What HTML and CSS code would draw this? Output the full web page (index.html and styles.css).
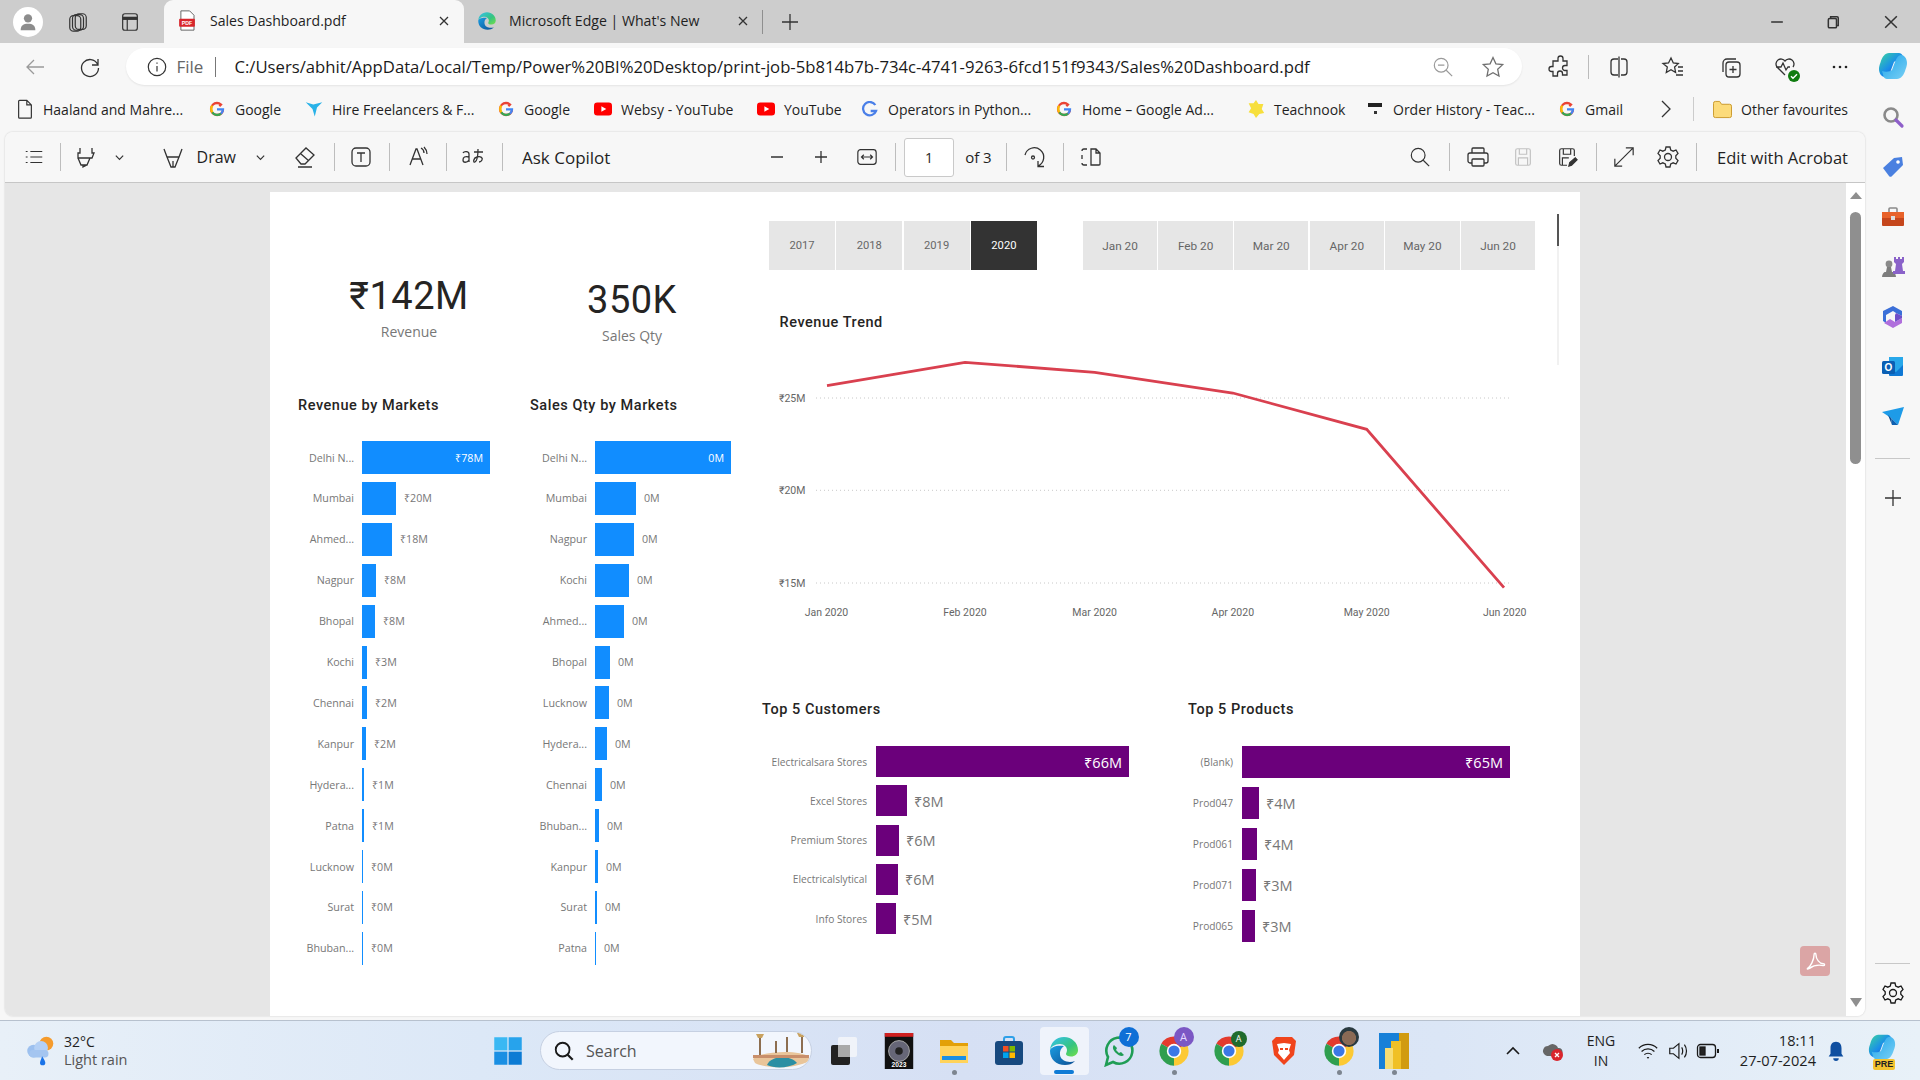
FILE: index.html
```html
<!DOCTYPE html>
<html lang="en">
<head>
  <meta charset="UTF-8">
  <title>Sales Dashboard.pdf</title>
  <link rel="stylesheet" href="styles.css">
</head>
<body>
  <svg class="defs" width="0" height="0">
    <symbol id="g" viewBox="0 0 24 24">
      <path d="M21 12.5c0 5-3.600 8.500-9 8.500a9 9 0 0 1 0-18c2.400 0 4.400.9 6 2.300l-2.500 2.400" fill="none" stroke="#ea4335" stroke-width="3.400"/>
      <path d="M5 7a9 9 0 0 0 0 10" fill="none" stroke="#fbbc05" stroke-width="3.400"/>
      <path d="M5 17a9 9 0 0 0 13 2" fill="none" stroke="#34a853" stroke-width="3.400"/>
      <path d="M12 12.500h9c0 3-1 5-3 6.500" fill="none" stroke="#4285f4" stroke-width="3.400"/>
    </symbol>
    <symbol id="yt" viewBox="0 0 24 24">
      <rect x="1" y="4" width="22" height="16" rx="4" fill="#f00"/>
      <path d="M10 8.500v7l6-3.500z" fill="#fff"/>
    </symbol>
    <symbol id="chrome" viewBox="0 0 24 24">
      <path d="M12 12L2.500 6.500A11 11 0 0 1 21.500 6.500z" fill="#e33b2e"/>
      <path d="M12 12l9.500-5.500A11 11 0 0 1 12 23z" fill="#fcc934"/>
      <path d="M12 12v11A11 11 0 0 1 2.500 6.500z" fill="#2f9e4f"/>
      <circle cx="12" cy="12" r="5.400" fill="#fff"/>
      <circle cx="12" cy="12" r="4.200" fill="#3b78e7"/>
    </symbol>
    <linearGradient id="edgeTop" x1="0" y1="0" x2="1" y2="1">
      <stop offset="0" stop-color="#35c1f1"/><stop offset=".6" stop-color="#36c47f"/><stop offset="1" stop-color="#74e04a"/>
    </linearGradient>
    <linearGradient id="edgeLow" x1="0" y1="0" x2="1" y2="1">
      <stop offset="0" stop-color="#1b9de2"/><stop offset="1" stop-color="#0c4f94"/>
    </linearGradient>
    <symbol id="edge" viewBox="0 0 32 32">
      <path d="M2 16C2 8 8 2 16 2c8 0 14 6 14 13 0 4-3 6.500-7 6.500-3 0-5-1-5-2.500 0-1 1-2 1-4 0-3-3-6-7-6-5 0-10 3-10 7z" fill="url(#edgeTop)"/>
      <path d="M2 16c0 8 6 14 15 14 4 0 7-1 10-4-5 2-14 1-15-6-.5-4 1-7 4-9-7-1-14 1-14 5z" fill="url(#edgeLow)"/>
    </symbol>
    <linearGradient id="copi" x1="0" y1="0" x2="1" y2="1">
      <stop offset="0" stop-color="#3bd6a0"/><stop offset=".5" stop-color="#1a8ee8"/><stop offset="1" stop-color="#1740c0"/>
    </linearGradient>
    <linearGradient id="copi2" x1="0" y1="0" x2="1" y2="1">
      <stop offset="0" stop-color="#1fa4ea"/><stop offset="1" stop-color="#7ad0f5"/>
    </linearGradient>
    <symbol id="copilot" viewBox="0 0 32 32">
      <path d="M12 3h10c1.500 0 3 1 3.500 2.500L27 11c-3-1-8-1-10 1l-3 8c-1 3-3 7-6 7-3 0-6-3-6-8 0-2 .5-4 1.500-6.500C5 7 8 3 12 3z" fill="url(#copi)"/>
      <path d="M20 29H10c-1.500 0-3-1-3.500-2.500L5 21c3 1 8 1 10-1l3-8c1-3 3-7 6-7 3 0 6 3 6 8 0 2-.5 4-1.500 6.500C27 25 24 29 20 29z" fill="url(#copi2)"/>
    </symbol>
  </svg>

  <header class="tabstrip">
    <div class="avatar">
      <svg viewBox="0 0 24 24" width="22" height="22"><circle cx="12" cy="8" r="4.500" fill="#8c8c8c"/><path d="M4 21c0-5 3-7 8-7s8 2 8 7z" fill="#8c8c8c"/></svg>
    </div>
    <div class="strip-btn workspaces">
      <svg class="ic" viewBox="0 0 24 24" width="22" height="22"><rect x="9" y="3" width="12" height="17" rx="4"/><rect x="6" y="4" width="12" height="17" rx="4"/><rect x="3" y="5" width="12" height="17" rx="4"/></svg>
    </div>
    <div class="strip-btn tabactions">
      <svg class="ic" viewBox="0 0 24 24" width="22" height="22"><rect x="4" y="3" width="16" height="18" rx="2.500"/><path d="M4 8h16" stroke-width="3.500"/><path d="M9 8v13"/></svg>
    </div>
    <div class="tab active">
      <svg viewBox="0 0 20 24" width="18" height="21"><path d="M3 1h10l5 5v17H3z" fill="#fff" stroke="#555"/><rect x="1" y="10" width="18" height="9" rx="1" fill="#d8262c"/><text x="10" y="17" class="pdf-mark">PDF</text></svg>
      <span class="tab-title">Sales Dashboard.pdf</span>
      <svg class="ic close" viewBox="0 0 12 12" width="12" height="12"><path d="M2 2l8 8M10 2l-8 8"/></svg>
    </div>
    <div class="tab second">
      <svg viewBox="0 0 32 32" width="20" height="20"><use href="#edge"/></svg>
      <span class="tab-title">Microsoft Edge | What's New</span>
      <svg class="ic close" viewBox="0 0 12 12" width="12" height="12"><path d="M2 2l8 8M10 2l-8 8"/></svg>
    </div>
    <span class="strip-sep"></span>
    <div class="strip-btn newtab">
      <svg class="ic" viewBox="0 0 20 20" width="20" height="20"><path d="M10 2v16M2 10h16"/></svg>
    </div>
    <div class="window-btns">
      <svg class="ic" viewBox="0 0 12 12" width="14" height="14"><path d="M1 6h10"/></svg>
      <svg class="ic" viewBox="0 0 12 12" width="14" height="14"><rect x="2" y="3" width="7" height="8" rx="1"/><path d="M4 3V1.500h5.500a1 1 0 0 1 1 1V9H9"/></svg>
      <svg class="ic" viewBox="0 0 12 12" width="14" height="14"><path d="M1 1l10 10M11 1L1 11"/></svg>
    </div>
  </header>

  <div class="browser">
    <div class="content">
      <div class="addr">
        <div class="addr-nav">
          <svg class="ic dim" viewBox="0 0 24 24" width="24" height="24"><path d="M21 12H4M11 5l-7 7 7 7"/></svg>
        </div>
        <div class="addr-nav reload">
          <svg class="ic" viewBox="0 0 24 24" width="24" height="24"><path d="M19.500 9A8.500 8.500 0 1 0 20.500 13M20 4v6h-6"/></svg>
        </div>
        <div class="pill">
          <svg class="ic info" viewBox="0 0 24 24" width="22" height="22"><circle cx="12" cy="12" r="9.500"/><path d="M12 11v6M12 7v1.500"/></svg>
          <span class="file-tag">File</span>
          <span class="pill-sep"></span>
          <span class="url">C:/Users/abhit/AppData/Local/Temp/Power%20BI%20Desktop/print-job-5b814b7b-734c-4741-9263-6fcd151f9343/Sales%20Dashboard.pdf</span>
          <svg class="ic dim zoomout" viewBox="0 0 24 24" width="22" height="22"><circle cx="10" cy="10" r="7.500"/><path d="M15.500 15.500L22 22M6.500 10h7"/></svg>
          <svg class="ic star" viewBox="0 0 24 24" width="24" height="24"><path d="M12 2.500l2.900 6.300 6.800.8-5 4.700 1.300 6.800-6-3.400-6 3.400 1.300-6.800-5-4.700 6.800-.8z"/></svg>
        </div>
        <div class="addr-tools">
          <svg class="ic" viewBox="0 0 24 24" width="24" height="24"><path d="M10 3.500a2.500 2.500 0 0 1 5 0V6h4v4.500h-2a2.500 2.500 0 0 0 0 5h2V20h-4.500v-1.500a2.500 2.500 0 0 0-5 0V21H5v-4.500H3.500a2.500 2.500 0 0 1 0-5H5V6h5z"/></svg>
          <span class="tool-sep"></span>
          <svg class="ic" viewBox="0 0 24 24" width="24" height="24"><path d="M11 4H7a3 3 0 0 0-3 3v10a3 3 0 0 0 3 3h4M14 4h3a3 3 0 0 1 3 3v10a3 3 0 0 1-3 3h-3M12 1.500v21"/></svg>
          <svg class="ic" viewBox="0 0 24 24" width="24" height="24"><path d="M10 3l2.300 5 5 .6-3.700 3.500 1 5.400-4.600-2.700-4.700 2.700 1-5.400L2 8.600l5.500-.6zM17 12h5M17 16h5M15 20h7"/></svg>
          <svg class="ic" viewBox="0 0 24 24" width="24" height="24"><rect x="7" y="7" width="14" height="15" rx="3"/><path d="M14 11v7M10.500 14.500h7M17 4H8a4 4 0 0 0-4 4v9"/></svg>
          <div class="health">
            <svg class="ic" viewBox="0 0 24 24" width="24" height="24"><path d="M12 20L4 12a5 5 0 0 1 8-6 5 5 0 0 1 8 6M3 12h5l2-4 3 7 2-3h2"/></svg>
            <svg class="health-ok" viewBox="0 0 12 12" width="12" height="12"><circle cx="6" cy="6" r="6" fill="#107c10"/><path d="M3 6.200l2 2 4-4" fill="none" stroke="#fff" stroke-width="1.400"/></svg>
          </div>
          <svg viewBox="0 0 20 6" width="20" height="6"><circle cx="4" cy="3" r="1.300" fill="#222"/><circle cx="10" cy="3" r="1.300" fill="#222"/><circle cx="16" cy="3" r="1.300" fill="#222"/></svg>
        </div>
      </div>

      <nav class="bookmarks">
        <a class="bm"><svg class="ic" viewBox="0 0 18 22" width="18" height="20"><path d="M3 1.500h8l5 5V20a1 1 0 0 1-1 1H3a1 1 0 0 1-1-1V2.500a1 1 0 0 1 1-1zM11 1.500V6.500h5"/></svg>Haaland and Mahre...</a>
        <a class="bm"><svg viewBox="0 0 24 24" width="18" height="16"><use href="#g"/></svg>Google</a>
        <a class="bm"><svg viewBox="0 0 24 24" width="18" height="18"><path d="M1 3l10 3 12-3-7 7-3 12-3-10z" fill="#29b2e8"/></svg>Hire Freelancers &amp; F...</a>
        <a class="bm"><svg viewBox="0 0 24 24" width="18" height="16"><use href="#g"/></svg>Google</a>
        <a class="bm"><svg viewBox="1 1 22 22" width="18" height="18"><use href="#yt" width="24" height="24"/></svg>Websy - YouTube</a>
        <a class="bm"><svg viewBox="1 1 22 22" width="18" height="18"><use href="#yt" width="24" height="24"/></svg>YouTube</a>
        <a class="bm"><svg viewBox="0 0 24 24" width="18" height="16"><path d="M20 6a10 10 0 1 0 1 9h-8" fill="none" stroke="#4a7fe8" stroke-width="3.400"/></svg>Operators in Python...</a>
        <a class="bm"><svg viewBox="0 0 24 24" width="18" height="16"><use href="#g"/></svg>Home – Google Ad...</a>
        <a class="bm"><svg viewBox="1 1 22 22" width="18" height="20"><path d="M12 1l3 5 6 0-2 6 3 5-6 1-4 5-3-5-6-2 3-5-3-6 6 0z" fill="#f7df3c"/></svg>Teachnook</a>
        <a class="bm"><svg viewBox="0 0 18 18" width="18" height="18"><rect x="2" y="3" width="14" height="4" fill="#222"/><rect x="8" y="11" width="3" height="3" fill="#333"/></svg>Order History - Teac...</a>
        <a class="bm"><svg viewBox="0 0 24 24" width="18" height="16"><use href="#g"/></svg>Gmail</a>
        <svg class="ic bm-more" viewBox="0 0 12 20" width="12" height="20"><path d="M2 2l8 8-8 8"/></svg>
        <span class="bm-sep"></span>
        <a class="bm"><svg viewBox="2 3 20 19" width="19" height="19"><path d="M2.500 6a2 2 0 0 1 2-2h4.500l2 3h8.500a2 2 0 0 1 2 2v10a2 2 0 0 1-2 2H4.500a2 2 0 0 1-2-2z" fill="#fcdb7a" stroke="#c9982a"/></svg>Other favourites</a>
      </nav>

      <main class="pdf">
        <div class="pdf-toolbar">
          <div class="tb-left">
            <svg class="ic" viewBox="0 0 24 24" width="22" height="22"><path d="M8 6h13M8 12h13M8 18h13M3 6h2M3 12h2M3 18h2"/></svg>
            <span class="tb-sep"></span>
            <svg class="ic" viewBox="0 0 24 24" width="24" height="24"><path d="M6 3v5H4v5h14l2-5h-2V3M4 13l3 7h6l3-7M9 20v2l4-2"/></svg>
            <svg class="ic" viewBox="0 0 12 12" width="11" height="11"><path d="M2 4l4 4 4-4"/></svg>
            <div class="tb-draw">
              <svg class="ic" viewBox="0 0 24 24" width="24" height="24"><path d="M3 4l3 8h12l3-8M6 12l4 10h4l4-10M12 22v-6"/></svg>
              <span>Draw</span>
            </div>
            <svg class="ic" viewBox="0 0 12 12" width="11" height="11"><path d="M2 4l4 4 4-4"/></svg>
            <svg class="ic" viewBox="0 0 24 24" width="24" height="24"><path d="M3 13L13 3l8 7-9 9H8zM8 9l8 7M5 22h14"/></svg>
            <span class="tb-sep"></span>
            <svg class="ic" viewBox="0 0 24 24" width="24" height="24"><rect x="3" y="3" width="18" height="18" rx="4"/><path d="M8 8h8M12 8v9"/></svg>
            <span class="tb-sep"></span>
            <svg class="ic" viewBox="0 0 24 24" width="24" height="24"><path d="M4 20L10 4h1l6 16M6.500 14h8M15 3c2 1 3 3 3 5M18 2c2 2 3 4 3 7"/></svg>
            <span class="tb-sep"></span>
            <svg class="ic" viewBox="0 0 24 24" width="24" height="24"><path d="M2 8c1-2 6-2 6 1v8M8 12c-4-1-6 0-6 3s4 3 6 0M13 7h9M17 4c0 6-1 12-3 13-2 1-2-4 2-5 4-1 6 1 5 3s-2 2-3 2"/></svg>
            <span class="tb-sep"></span>
            <span class="tb-text ask">Ask Copilot</span>
          </div>
          <div class="tb-mid">
            <svg class="ic" viewBox="0 0 16 16" width="16" height="16"><path d="M2 8h12"/></svg>
            <svg class="ic" viewBox="0 0 16 16" width="16" height="16"><path d="M2 8h12M8 2v12"/></svg>
            <svg class="ic" viewBox="0 0 24 24" width="22" height="22"><rect x="2" y="4" width="20" height="16" rx="3"/><path d="M6 12h12M8.500 9.500L6 12l2.500 2.500M15.500 9.500L18 12l-2.500 2.500"/></svg>
            <span class="tb-sep"></span>
            <span class="page-box">1</span>
            <span class="tb-of">of 3</span>
            <span class="tb-sep"></span>
            <svg class="ic" viewBox="0 0 24 24" width="24" height="24"><path d="M3 10a9.500 9.500 0 1 1 13 11M16 16v5.500h6"/><circle cx="11" cy="12.500" r="1.500"/></svg>
            <span class="tb-sep"></span>
            <svg class="ic" viewBox="0 0 24 24" width="24" height="24"><path d="M12 4h5l4 4v11a1 1 0 0 1-1 1h-8zM17 4v4h4M8 4H5a2 2 0 0 0-2 2M3 10v4M3 18a2 2 0 0 0 2 2h3" /></svg>
          </div>
          <div class="tb-right">
            <svg class="ic" viewBox="0 0 24 24" width="22" height="22"><circle cx="10" cy="10" r="7.500"/><path d="M15.500 15.500L22 22"/></svg>
            <span class="tb-sep"></span>
            <svg class="ic" viewBox="0 0 24 24" width="24" height="24"><path d="M6 8V4a1 1 0 0 1 1-1h10a1 1 0 0 1 1 1v4M6 18H4a2 2 0 0 1-2-2v-6a2 2 0 0 1 2-2h16a2 2 0 0 1 2 2v6a2 2 0 0 1-2 2h-2"/><rect x="6" y="14" width="12" height="7" rx="1"/></svg>
            <svg class="ic off" viewBox="0 0 24 24" width="22" height="22"><path d="M4 5a2 2 0 0 1 2-2h12a2 2 0 0 1 2 2v14a2 2 0 0 1-2 2H6a2 2 0 0 1-2-2zM8 3v6h8V3M7 21v-8h10v8"/></svg>
            <svg class="ic" viewBox="0 0 24 24" width="22" height="22"><path d="M12 21H6a2 2 0 0 1-2-2V5a2 2 0 0 1 2-2h12a2 2 0 0 1 2 2v6M8 3v6h8V3M7 21v-8h7"/><path d="M14 22l1-4 6-5 2 2-6 6z" fill="#333"/></svg>
            <span class="tb-sep"></span>
            <svg class="ic" viewBox="0 0 24 24" width="22" height="22"><path d="M14 2h8v8M22 2L2 22M2 14v8h8"/></svg>
            <svg class="ic" viewBox="0 0 24 24" width="24" height="24"><circle cx="12" cy="12" r="3.500"/><path d="M10 2h4l.7 3 2.500 1.200L20 5l2 3.500-2.200 2.200v2.600L22 15.500 20 19l-2.800-1.200-2.500 1.200-.7 3h-4l-.7-3-2.500-1.200L4 19l-2-3.500 2.200-2.200v-2.600L2 8.500 4 5l2.800 1.200L9.300 5z"/></svg>
            <span class="tb-sep"></span>
            <span class="tb-text acrobat">Edit with Acrobat</span>
          </div>
        </div>

        <div class="pdf-body">
          <div class="pdf-scroll">
            <section class="page">
              <div class="col-left">
                <div class="kpis">
                  <div class="kpi">
                    <div class="kpi-value">₹142M</div>
                    <div class="kpi-name">Revenue</div>
                  </div>
                  <div class="kpi kpi-low">
                    <div class="kpi-value">350K</div>
                    <div class="kpi-name">Sales Qty</div>
                  </div>
                </div>
                <div class="market-charts">
                  <div class="chart">
                    <h2 class="chart-title">Revenue by Markets</h2>
                    <div class="bars">
                      <div class="row"><span class="lbl">Delhi N...</span><div class="bar" style="width:128px"><span>₹78M</span></div></div>
                      <div class="row"><span class="lbl">Mumbai</span><div class="bar" style="width:34px"></div><span class="val">₹20M</span></div>
                      <div class="row"><span class="lbl">Ahmed...</span><div class="bar" style="width:30px"></div><span class="val">₹18M</span></div>
                      <div class="row"><span class="lbl">Nagpur</span><div class="bar" style="width:14px"></div><span class="val">₹8M</span></div>
                      <div class="row"><span class="lbl">Bhopal</span><div class="bar" style="width:13px"></div><span class="val">₹8M</span></div>
                      <div class="row"><span class="lbl">Kochi</span><div class="bar" style="width:5px"></div><span class="val">₹3M</span></div>
                      <div class="row"><span class="lbl">Chennai</span><div class="bar" style="width:5px"></div><span class="val">₹2M</span></div>
                      <div class="row"><span class="lbl">Kanpur</span><div class="bar" style="width:4px"></div><span class="val">₹2M</span></div>
                      <div class="row"><span class="lbl">Hydera...</span><div class="bar" style="width:2px"></div><span class="val">₹1M</span></div>
                      <div class="row"><span class="lbl">Patna</span><div class="bar" style="width:2px"></div><span class="val">₹1M</span></div>
                      <div class="row"><span class="lbl">Lucknow</span><div class="bar" style="width:1px"></div><span class="val">₹0M</span></div>
                      <div class="row"><span class="lbl">Surat</span><div class="bar" style="width:1px"></div><span class="val">₹0M</span></div>
                      <div class="row"><span class="lbl">Bhuban...</span><div class="bar" style="width:1px"></div><span class="val">₹0M</span></div>
                    </div>
                  </div>
                  <div class="chart chart-qty">
                    <h2 class="chart-title">Sales Qty by Markets</h2>
                    <div class="bars">
                      <div class="row"><span class="lbl">Delhi N...</span><div class="bar" style="width:136px"><span>0M</span></div></div>
                      <div class="row"><span class="lbl">Mumbai</span><div class="bar" style="width:41px"></div><span class="val">0M</span></div>
                      <div class="row"><span class="lbl">Nagpur</span><div class="bar" style="width:39px"></div><span class="val">0M</span></div>
                      <div class="row"><span class="lbl">Kochi</span><div class="bar" style="width:34px"></div><span class="val">0M</span></div>
                      <div class="row"><span class="lbl">Ahmed...</span><div class="bar" style="width:29px"></div><span class="val">0M</span></div>
                      <div class="row"><span class="lbl">Bhopal</span><div class="bar" style="width:15px"></div><span class="val">0M</span></div>
                      <div class="row"><span class="lbl">Lucknow</span><div class="bar" style="width:14px"></div><span class="val">0M</span></div>
                      <div class="row"><span class="lbl">Hydera...</span><div class="bar" style="width:12px"></div><span class="val">0M</span></div>
                      <div class="row"><span class="lbl">Chennai</span><div class="bar" style="width:7px"></div><span class="val">0M</span></div>
                      <div class="row"><span class="lbl">Bhuban...</span><div class="bar" style="width:4px"></div><span class="val">0M</span></div>
                      <div class="row"><span class="lbl">Kanpur</span><div class="bar" style="width:3px"></div><span class="val">0M</span></div>
                      <div class="row"><span class="lbl">Surat</span><div class="bar" style="width:2px"></div><span class="val">0M</span></div>
                      <div class="row"><span class="lbl">Patna</span><div class="bar" style="width:1px"></div><span class="val">0M</span></div>
                    </div>
                  </div>
                </div>
              </div>

              <div class="col-right">
                <div class="slicers">
                  <div class="slicer years">
                    <span>2017</span><span>2018</span><span>2019</span><span class="on">2020</span>
                  </div>
                  <div class="slicer months">
                    <span>Jan 20</span><span>Feb 20</span><span>Mar 20</span><span>Apr 20</span><span>May 20</span><span>Jun 20</span>
                  </div>
                </div>
                <h2 class="chart-title trend-title">Revenue Trend</h2>
                <svg class="trend" viewBox="770 340 770 290" width="770" height="290">
                  <g class="grid">
                    <path d="M816 398H1511M816 490.300H1511M816 583H1511"/>
                  </g>
                  <g class="axis">
                    <text x="779" y="402">₹25M</text>
                    <text x="779" y="494">₹20M</text>
                    <text x="779" y="587">₹15M</text>
                  </g>
                  <g class="axis axis-x">
                    <text x="826.500" y="616">Jan 2020</text>
                    <text x="965" y="616">Feb 2020</text>
                    <text x="1094.700" y="616">Mar 2020</text>
                    <text x="1232.800" y="616">Apr 2020</text>
                    <text x="1366.700" y="616">May 2020</text>
                    <text x="1504.700" y="616">Jun 2020</text>
                  </g>
                  <polyline class="trend-line" points="827,385.700 965,362.300 1094.700,372.300 1232.800,393 1366.700,429.300 1504,587.700"/>
                </svg>
                <div class="top-charts">
                  <div class="chart top-cust">
                    <h2 class="chart-title">Top 5 Customers</h2>
                    <div class="bars purple">
                      <div class="row"><span class="lbl">Electricalsara Stores</span><div class="bar" style="width:253px"><span>₹66M</span></div></div>
                      <div class="row"><span class="lbl">Excel Stores</span><div class="bar" style="width:31px"></div><span class="val">₹8M</span></div>
                      <div class="row"><span class="lbl">Premium Stores</span><div class="bar" style="width:23px"></div><span class="val">₹6M</span></div>
                      <div class="row"><span class="lbl">Electricalslytical</span><div class="bar" style="width:22px"></div><span class="val">₹6M</span></div>
                      <div class="row"><span class="lbl">Info Stores</span><div class="bar" style="width:20px"></div><span class="val">₹5M</span></div>
                    </div>
                  </div>
                  <div class="chart top-prod">
                    <h2 class="chart-title">Top 5 Products</h2>
                    <div class="bars purple">
                      <div class="row"><span class="lbl">(Blank)</span><div class="bar" style="width:268px"><span>₹65M</span></div></div>
                      <div class="row"><span class="lbl">Prod047</span><div class="bar" style="width:17px"></div><span class="val">₹4M</span></div>
                      <div class="row"><span class="lbl">Prod061</span><div class="bar" style="width:15px"></div><span class="val">₹4M</span></div>
                      <div class="row"><span class="lbl">Prod071</span><div class="bar" style="width:14px"></div><span class="val">₹3M</span></div>
                      <div class="row"><span class="lbl">Prod065</span><div class="bar" style="width:13px"></div><span class="val">₹3M</span></div>
                    </div>
                  </div>
                </div>
              </div>
              <span class="visual-scroll"></span>
            </section>
            <div class="acrobat-fab">
              <svg viewBox="0 0 24 24" width="22" height="22"><path d="M4 20c3-2 7-9 7-15 0-2 2-2 2 0 0 5 4 10 8 10 2 0 2 2 0 2-5-1-11 0-15 3-2 1-3 1-2 0z" fill="none" stroke="#fff" stroke-width="1.500"/></svg>
            </div>
          </div>
          <div class="pdf-scrollbar">
            <span class="arrow up"></span>
            <span class="thumb"></span>
            <span class="arrow down"></span>
          </div>
        </div>
      </main>
    </div>

    <aside class="side">
      <div class="side-copilot"><svg viewBox="0 0 32 32" width="32" height="32"><use href="#copilot"/></svg></div>
      <div class="side-cell">
        <svg viewBox="0 0 24 24" width="24" height="24"><circle cx="10" cy="10" r="6.500" fill="none" stroke="#8a8a8a" stroke-width="2.600"/><path d="M15 15l6 6" stroke="#8e5fc9" stroke-width="3.200" stroke-linecap="round"/></svg>
      </div>
      <div class="side-cell">
        <svg viewBox="0 0 24 24" width="24" height="24"><path d="M2 13L13 3l8-1 1 8-11 11a2 2 0 0 1-3 0z" fill="#4a80e0"/><circle cx="17" cy="7" r="1.800" fill="#fff"/></svg>
      </div>
      <div class="side-cell">
        <svg viewBox="0 0 24 24" width="24" height="24"><path d="M8 7V4a1 1 0 0 1 1-1h6a1 1 0 0 1 1 1v3" fill="none" stroke="#8a8a8a" stroke-width="1.600"/><path d="M1 7h22v6H1z" fill="#e8622a"/><path d="M1 13h22v7a1 1 0 0 1-1 1H2a1 1 0 0 1-1-1z" fill="#c5461c"/><rect x="10" y="11" width="4" height="4" fill="#ddd"/></svg>
      </div>
      <div class="side-cell">
        <svg viewBox="0 0 24 24" width="24" height="24"><circle cx="8" cy="9" r="3.400" fill="#8a8a8a"/><path d="M6 12h4l1 5H5zM1 22c0-3 2-5 3-5h8c1 0 3 2 3 5z" fill="#7d7d7d"/><path d="M13 2h2v2h2V2h2v2h2V2h2v5l-2 2 1 7h2v3H12v-3h2l1-7-2-2z" fill="#8a62c9"/></svg>
      </div>
      <div class="side-cell">
        <svg viewBox="0 0 24 24" width="24" height="24"><path d="M12 1l9 5v5l-6-3-3-2-7 4v8l-3-2V6z" fill="#3b6fd8"/><path d="M3 18l6-4 5 3 7-4v5l-9 5z" fill="#b06fdc"/><path d="M15 8l6 3v2l-7 4V10z" fill="#6f4fc9"/></svg>
      </div>
      <div class="side-cell">
        <svg viewBox="0 0 24 24" width="24" height="24"><path d="M8 2h14v11L15 18H8z" fill="#28a8ea"/><path d="M22 10v10a1 1 0 0 1-1 1H9a1 1 0 0 1-1-1v-6l7 3z" fill="#0f78d4"/><rect x="1" y="6" width="13" height="13" rx="1.500" fill="#0a5fb4"/><text x="7.500" y="16" class="outlook-mark">O</text></svg>
      </div>
      <div class="side-cell">
        <svg viewBox="0 0 24 24" width="24" height="24"><path d="M1 7l22-5-6 18-7-7z" fill="#1e9be8"/><path d="M10 13l1 7 6 0z" fill="#0d5fb0"/><path d="M10 13l1 7-4-10z" fill="#0b4a8f"/></svg>
      </div>
      <span class="side-sep"></span>
      <div class="side-cell">
        <svg class="ic" viewBox="0 0 20 20" width="20" height="20"><path d="M10 2v16M2 10h16"/></svg>
      </div>
      <span class="side-sep side-sep-low"></span>
      <div class="side-gear">
        <svg class="ic dark" viewBox="0 0 24 24" width="24" height="24"><circle cx="12" cy="12" r="3.500"/><path d="M10 2h4l.7 3 2.500 1.200L20 5l2 3.500-2.200 2.200v2.600L22 15.500 20 19l-2.800-1.200-2.500 1.200-.7 3h-4l-.7-3-2.500-1.200L4 19l-2-3.500 2.200-2.200v-2.600L2 8.500 4 5l2.800 1.200L9.300 5z"/></svg>
      </div>
    </aside>
  </div>

  <footer class="taskbar">
    <div class="weather">
      <svg viewBox="0 0 32 32" width="34" height="34"><circle cx="22" cy="9" r="6.500" fill="#f59b2c"/><circle cx="10" cy="16" r="6" fill="#9cc0ef"/><circle cx="17" cy="13" r="6.500" fill="#b4d0f5"/><rect x="6" y="15" width="18" height="7" rx="3.500" fill="#a4c5f0"/><path d="M18 21c2 3 3 5 3 6a2.500 2.500 0 0 1-5 0c0-1 1-3 2-6z" fill="#1a73e8"/></svg>
      <div class="weather-text">
        <div>32°C</div>
        <div class="soft">Light rain</div>
      </div>
    </div>
    <div class="task-cell">
      <svg viewBox="0 0 24 24" width="30" height="30"><path d="M1 1h10.500v10.500H1z" fill="#3ab8f3"/><path d="M12.500 1H23v10.500H12.500z" fill="#27a3ec"/><path d="M1 12.500h10.500V23H1z" fill="#1a8fe3"/><path d="M12.500 12.500H23V23H12.500z" fill="#0c7bd4"/></svg>
    </div>
    <div class="task-search">
      <svg class="ic dark" viewBox="0 0 24 24" width="22" height="22"><circle cx="10.500" cy="10.500" r="7.500" stroke-width="2"/><path d="M16 16l5.500 5.500" stroke-width="2.400"/></svg>
      <span>Search</span>
      <svg class="bridge" viewBox="0 0 60 40" width="60" height="40"><path d="M2 28C8 20 50 18 58 26v4C45 38 15 38 4 32z" fill="#e9c59a"/><path d="M16 34c4-10 24-10 30-2-8 5-22 6-30 2z" fill="#2b8fa3"/><path d="M8 6h2v20H8zM24 10h2v12h-2zM35 6h2v15h-2zM50 4h2v18h-2z" fill="#8d6e50"/><path d="M5 3h8l-2 4H7zM46 2h9l-2 4h-5z" fill="#c9a25f"/><path d="M2 24h56v3H2z" fill="#c98f6b"/></svg>
    </div>
    <div class="task-cell">
      <svg viewBox="0 0 30 30" width="30" height="30"><rect x="2" y="9" width="19" height="20" rx="2" fill="#222"/><rect x="9" y="1" width="19" height="20" rx="2" fill="#f4f6f9" fill-opacity=".85"/><rect x="9" y="9" width="12" height="12" fill="#a9a9a9"/></svg>
    </div>
    <div class="task-cell">
      <svg viewBox="0 0 30 38" width="30" height="36"><rect width="30" height="38" fill="#111"/><rect width="30" height="4" fill="#d02020"/><circle cx="15" cy="19" r="11" fill="#667" stroke="#aaa"/><circle cx="15" cy="19" r="4" fill="#222"/><text x="15" y="36" class="year-mark">2023</text></svg>
    </div>
    <div class="task-cell dotted">
      <svg viewBox="0 0 32 32" width="32" height="32"><path d="M2 5h11l3 3h14v6H2z" fill="#e3a008"/><path d="M2 11h28v17H2z" fill="#ffd35c"/><path d="M4 21h24v4H4z" fill="#1a8fe3"/></svg>
    </div>
    <div class="task-cell">
      <svg viewBox="0 0 32 32" width="32" height="32"><path d="M11 7V4a2 2 0 0 1 2-2h6a2 2 0 0 1 2 2v3" fill="none" stroke="#2ea0e8" stroke-width="2"/><rect x="2" y="6" width="28" height="24" rx="3" fill="#17497f"/><rect x="10" y="11" width="5.500" height="5.500" fill="#f25022"/><rect x="16.500" y="11" width="5.500" height="5.500" fill="#7fba00"/><rect x="10" y="17.500" width="5.500" height="5.500" fill="#00a4ef"/><rect x="16.500" y="17.500" width="5.500" height="5.500" fill="#ffb900"/></svg>
    </div>
    <div class="task-cell task-on">
      <svg viewBox="0 0 32 32" width="32" height="32"><use href="#edge"/></svg>
      <span class="task-active"></span>
    </div>
    <div class="task-cell">
      <svg viewBox="0 0 32 32" width="32" height="32"><path d="M3 30l2-8A13 13 0 1 1 10 27z" fill="none" stroke="#1f9d55" stroke-width="2.600"/><path d="M11 10c-2 2-1 5 2 8s6 4 8 2l-3-3-2 1-3-3 1-2z" fill="#1f9d55"/></svg>
      <span class="badge blue">7</span>
    </div>
    <div class="task-cell dotted">
      <svg viewBox="0 0 24 24" width="32" height="32"><use href="#chrome"/></svg>
      <span class="badge purple">A</span>
    </div>
    <div class="task-cell">
      <svg viewBox="0 0 24 24" width="32" height="32"><use href="#chrome"/></svg>
      <span class="badge green">A</span>
    </div>
    <div class="task-cell">
      <svg viewBox="0 0 28 32" width="28" height="32"><path d="M6 2h16l4 4-2 14-10 10L4 20 2 6z" fill="#f0441c"/><path d="M7 9l7-1 7 1-2 6 1 3-6 7-6-7 1-3z" fill="#fff"/><path d="M10 13h3v2h-3zM15 13h3v2h-3z" fill="#f0441c"/></svg>
    </div>
    <div class="task-cell dotted">
      <svg viewBox="0 0 24 24" width="32" height="32"><use href="#chrome"/></svg>
      <span class="badge face"></span>
    </div>
    <div class="task-cell dotted">
      <svg viewBox="0 0 30 36" width="30" height="36"><rect width="30" height="36" fill="#1780d8"/><rect x="20" width="10" height="36" fill="#d19b10"/><rect x="12" y="8" width="10" height="28" fill="#f0c026"/><rect x="6" y="15" width="8" height="21" fill="#f7dd73"/></svg>
    </div>
    <div class="tray">
      <svg class="ic dark" viewBox="0 0 16 16" width="16" height="16"><path d="M2 11l6-6 6 6" stroke-width="1.600"/></svg>
      <svg viewBox="0 0 24 24" width="24" height="24"><path d="M4 16a5 5 0 0 1 3-9 6 6 0 0 1 10 2 4 4 0 0 1 1 8H6z" fill="#666"/><circle cx="16" cy="16" r="6" fill="#d9252c"/><path d="M14 14l4 4M18 14l-4 4" stroke="#fff" stroke-width="1.300"/></svg>
      <div class="lang">ENG<br>IN</div>
      <svg class="ic dark" viewBox="0 0 24 24" width="22" height="22"><path d="M2 9a14 14 0 0 1 20 0M5 12.500a10 10 0 0 1 14 0M8 16a6 6 0 0 1 8 0M11 19.500a2 2 0 0 1 2 0"/></svg>
      <svg class="ic dark" viewBox="0 0 24 24" width="22" height="22"><path d="M3 9h4l6-5v16l-6-5H3zM16 8c1.500 2 1.500 6 0 8M19 5c3 4 3 10 0 14"/></svg>
      <svg class="ic dark" viewBox="0 0 24 16" width="24" height="16"><rect x="1.500" y="1.500" width="18" height="13" rx="3"/><rect x="4" y="4" width="5" height="8" fill="#222"/><path d="M22 6v4" stroke-width="2"/></svg>
      <div class="clock">18:11<br>27-07-2024</div>
      <svg viewBox="0 0 24 24" width="22" height="22"><path d="M12 2c-4 0-6 3-6 7v6l-2 3h16l-2-3V9c0-4-2-7-6-7z" fill="#0f4fa0"/><path d="M9 20a3 3 0 0 0 6 0z" fill="#0f4fa0"/></svg>
      <div class="tray-copilot">
        <svg viewBox="0 0 32 32" width="30" height="30"><use href="#copilot"/></svg>
        <span class="pre">PRE</span>
      </div>
    </div>
  </footer>
</body>
</html>
```

FILE: styles.css
```css
html, body {
  margin: 0;
  height: 100%;
}
body {
  width: 1920px;
  height: 1080px;
  overflow: hidden;
  display: flex;
  flex-direction: column;
  background: #f7f7f7;
  color: #1f1f1f;
  font-family: "Open Sans", "Noto Sans", sans-serif;
  font-size: 13.5px;
}
.defs {
  position: absolute;
}
.ic {
  fill: none;
  stroke: #333;
  stroke-width: 1.3;
}
.ic.dim { stroke: #9a9a9a; }
.ic.off { stroke: #c2c2c2; }
.ic.dark { stroke: #1a1a1a; }
.ic.star { stroke: #707070; }
svg { flex: none; }

/* tab strip */
.tabstrip {
  height: 43px;
  flex: none;
  display: flex;
  align-items: center;
  background: #cdcdcd;
}
.avatar {
  width: 30px;
  height: 30px;
  margin-left: 13px;
  border-radius: 50%;
  background: #fff;
  display: flex;
  align-items: center;
  justify-content: center;
}
.strip-btn {
  display: flex;
  justify-content: center;
}
.workspaces { width: 46px; margin-left: 12px; }
.tabactions { width: 46px; margin-left: 6px; }
.tab {
  height: 43px;
  display: flex;
  align-items: center;
  box-sizing: border-box;
  padding-bottom: 2px;
}
.tab.active {
  width: 300px;
  margin-left: 11px;
  padding-left: 14px;
  padding-right: 14px;
  background: #f7f7f7;
  border-radius: 9px 9px 0 0;
  gap: 14px;
}
.tab.second {
  width: 298px;
  padding-left: 13px;
  padding-right: 13px;
  gap: 12px;
}
.tab-title {
  flex: 1;
  white-space: nowrap;
  font-size: 14.1px;
}
.pdf-mark {
  font: 700 6px "Liberation Sans", sans-serif;
  fill: #fff;
  text-anchor: middle;
}
.strip-sep {
  width: 1px;
  height: 24px;
  background: #8f8f8f;
}
.newtab { width: 54px; }
.window-btns {
  margin-left: auto;
  display: grid;
  grid-template-columns: 56px 56px 59px;
  justify-items: center;
}

/* browser frame */
.browser {
  flex: 1;
  display: flex;
  min-height: 0;
}
.content {
  width: 1865px;
  display: flex;
  flex-direction: column;
}
.addr {
  height: 52px;
  flex: none;
  box-sizing: border-box;
  display: flex;
  align-items: center;
  padding: 0 0 5px 8px;
}
.addr-nav {
  width: 54px;
  flex: none;
  display: flex;
  justify-content: center;
}
.addr-nav.reload { width: 56px; margin-right: 7.5px; }
.pill {
  width: 1396px;
  height: 37px;
  flex: none;
  box-sizing: border-box;
  padding-left: 20px;
  display: flex;
  align-items: center;
  background: #fff;
  border-radius: 19px;
  box-shadow: 0 1px 2px rgba(0, 0, 0, .08);
}
.file-tag {
  margin-left: 9px;
  color: #666;
  font-size: 17px;
}
.pill-sep {
  width: 1px;
  height: 20px;
  margin: 0 18px 0 12px;
  background: #777;
}
.url {
  flex: 1;
  white-space: nowrap;
  font-size: 16.700px;
  color: #1a1a1a;
}
.zoomout { margin-right: 27px; }
.star { margin-right: 17px; }
.addr-tools {
  margin-left: 16px;
  flex: none;
  display: grid;
  grid-template-columns: 44px 14px 47px 60px 57px 51px 58px;
  justify-items: center;
  align-items: center;
}
.tool-sep {
  width: 1px;
  height: 24px;
  background: #bbb;
}
.health {
  position: relative;
  height: 24px;
}
.health-ok {
  position: absolute;
  right: -3px;
  bottom: -3px;
}

/* favourites bar */
.bookmarks {
  height: 37px;
  flex: none;
  padding: 0 0 9px 16px;
  display: grid;
  grid-template-columns: 192px 97px 192px 97px 163px 104px 194px 192px 119px 192px 97px 22px 32px auto;
  align-items: center;
  font-size: 14px;
  box-sizing: border-box;
}
.bm {
  display: flex;
  align-items: center;
  gap: 9px;
  white-space: nowrap;
  overflow: hidden;
}
.bm-more { justify-self: center; }
.bm-sep {
  width: 1px;
  height: 24px;
  background: #ccc;
  justify-self: center;
}
.bm-sep + .bm { margin-left: 4px; }

/* pdf viewer */
.pdf {
  flex: 1;
  min-height: 0;
  margin: 0 0 4px 5px;
  display: flex;
  flex-direction: column;
  border-radius: 8px;
  box-shadow: 0 0 2px rgba(0, 0, 0, .2);
  overflow: hidden;
}
.pdf-toolbar {
  height: 50px;
  flex: none;
  box-sizing: content-box;
  display: flex;
  align-items: center;
  background: #f7f7f7;
  border-bottom: 1px solid #c6c6c6;
  padding-left: 14px;
  font-size: 16.500px;
}
.tb-left, .tb-mid, .tb-right {
  display: grid;
  justify-items: center;
  align-items: center;
}
.tb-left {
  grid-template-columns: 30px 23px 28px 38px 98px 48px 42px 16px 38px 19px 37px 20px 34px 24px auto;
}
.tb-mid {
  margin-left: 145px;
  grid-template-columns: 44px 44px 48px 8px 59px 40px 16px 40px 18px 37px;
}
.tb-right {
  margin-left: auto;
  padding-right: 17px;
  grid-template-columns: 38px 20px 38px 51px 38px 20px 35px 54px 3px auto;
}
.tb-sep {
  width: 1px;
  height: 28px;
  background: #bdbdbd;
}
.tb-draw {
  justify-self: end;
  display: flex;
  align-items: center;
  gap: 12px;
  font-size: 16px;
}
.tb-text { white-space: nowrap; }
.ask { margin-left: 8px; font-size: 17px; }
.acrobat { margin-left: 19px; }
.page-box {
  width: 50px;
  height: 39px;
  box-sizing: border-box;
  border: 1px solid #c9c9c9;
  border-radius: 3px;
  background: #fff;
  text-align: center;
  line-height: 37px;
  font-size: 14px;
}
.tb-of { font-size: 15px; }

.pdf-body {
  flex: 1;
  min-height: 0;
  display: flex;
}
.pdf-scroll {
  flex: 1;
  position: relative;
  background: #e6e6e6;
  overflow: hidden;
  padding-top: 9px;
}
.acrobat-fab {
  position: absolute;
  right: 16px;
  bottom: 40px;
  width: 30px;
  height: 30px;
  border-radius: 4px;
  background: #dba5a5;
  display: flex;
  align-items: center;
  justify-content: center;
}
.pdf-scrollbar {
  width: 19px;
  flex: none;
  background: #fff;
  display: flex;
  flex-direction: column;
  align-items: center;
  padding-top: 9px;
  box-sizing: border-box;
}
.arrow {
  width: 0;
  height: 0;
  border-left: 6px solid transparent;
  border-right: 6px solid transparent;
}
.arrow.up { border-bottom: 7px solid #8f8f8f; }
.arrow.down {
  margin-top: auto;
  margin-bottom: 9px;
  border-top: 9px solid #8f8f8f;
}
.thumb {
  width: 11px;
  height: 252px;
  margin-top: 13px;
  border-radius: 6px;
  background: #8f8f8f;
}

/* the report page */
.page {
  position: relative;
  width: 1310px;
  height: 860px;
  margin-left: 265px;
  background: #fff;
  display: flex;
  padding-left: 28px;
  box-sizing: border-box;
}
.col-left {
  width: 464px;
  flex: none;
}
.col-right {
  flex: 1;
  padding-top: 29px;
}
.kpis {
  height: 193px;
  display: flex;
  box-sizing: border-box;
  padding-top: 83px;
}
.kpi {
  width: 222px;
  text-align: center;
}
.kpi + .kpi {
  width: 224px;
}
.kpi-low { padding-top: 4px; }
.kpi-value {
  font-family: Roboto, "Noto Sans", sans-serif;
  font-size: 38px;
  line-height: 42px;
  letter-spacing: .5px;
  color: #252423;
}
.kpi-name {
  margin-top: 5px;
  font-size: 14px;
  line-height: 20px;
  color: #777;
}
.market-charts {
  display: grid;
  grid-template-columns: 232px 232px;
}
.chart-title {
  margin: 0;
  font-family: Roboto, "Noto Sans", sans-serif;
  font-size: 14.500px;
  font-weight: 500;
  line-height: 20px;
  letter-spacing: .55px;
  color: #252423;
}
.market-charts .chart-title { margin-top: 11px; }
.bars {
  margin-top: 25px;
  display: flex;
  flex-direction: column;
  gap: 7.920px;
}
.row {
  height: 33px;
  display: flex;
  align-items: center;
}
.lbl {
  width: 56px;
  flex: none;
  margin-right: 8px;
  text-align: right;
  font-size: 10.700px;
  color: #777;
  white-space: nowrap;
}
.chart-qty .lbl { width: 57px; }
.bar {
  height: 100%;
  background: #118dff;
  display: flex;
  align-items: center;
  justify-content: flex-end;
  color: #fff;
  font-size: 10.700px;
}
.bar span { padding-right: 7px; }
.val {
  margin-left: 8px;
  font-size: 10.700px;
  color: #777;
}
.slicers {
  display: flex;
  padding-left: 7px;
}
.slicer {
  display: grid;
  height: 49px;
  gap: 1.300px;
  font-family: Roboto, "Noto Sans", sans-serif;
  font-size: 11.200px;
  color: #666;
}
.slicer span {
  background: #e6e6e6;
  display: flex;
  align-items: center;
  justify-content: center;
}
.slicer .on {
  background: #333;
  color: #fff;
}
.years {
  grid-template-columns: repeat(4, 66px);
}
.months {
  margin-left: 46px;
  grid-template-columns: repeat(6, 74.300px);
  font-size: 11.800px;
}
.trend-title {
  margin: 43px 0 0 17.500px;
}
.trend {
  display: block;
  margin: 7px 0 0 8px;
}
.grid path {
  fill: none;
  stroke: #c8c8c8;
  stroke-width: 1;
  stroke-dasharray: 1 3;
}
.axis text {
  font: 10.500px Roboto, "Noto Sans", sans-serif;
  fill: #666;
}
.axis-x text { text-anchor: middle; }
.trend-line {
  fill: none;
  stroke: #d9404f;
  stroke-width: 2.800;
}
.top-charts {
  display: flex;
  margin-top: 70px;
}
.top-charts .bars {
  margin-top: 26px;
}
.top-charts .lbl {
  font-size: 10.200px;
}
.top-charts .val,
.top-charts .bar {
  font-size: 14.500px;
}
.purple .bar { background: #6b007b; }
.top-cust { width: 426px; }
.top-cust .row { height: 31px; }
.top-cust .lbl { width: 105px; }
.top-cust .bars { gap: 8.300px; }
.top-prod .row { height: 32px; }
.top-prod .lbl { width: 45px; }
.top-prod .bars { gap: 9px; }
.purple .lbl { margin-right: 9px; }
.purple .val { margin-left: 7px; }
.visual-scroll {
  position: absolute;
  left: 1287px;
  top: 22px;
  width: 2px;
  height: 151px;
  background: linear-gradient(#555 32px, #f1f1f1 32px);
}

/* edge side panel */
.side {
  width: 55px;
  flex: none;
  display: flex;
  flex-direction: column;
  align-items: center;
  padding-bottom: 4px;
  box-sizing: border-box;
}
.side-copilot {
  height: 46px;
  margin-bottom: 3px;
  display: flex;
  align-items: center;
}
.side-cell {
  height: 50px;
  flex: none;
  display: flex;
  align-items: center;
}
.side-sep {
  width: 35px;
  height: 1px;
  margin: 16px 0 14px;
  background: #c8c8c8;
}
.side-sep-low {
  margin: auto 0 6px;
}
.side-gear {
  height: 46px;
  display: flex;
  align-items: center;
}
.outlook-mark {
  font: 700 10px "Liberation Sans", sans-serif;
  fill: #fff;
  text-anchor: middle;
}
.year-mark {
  font: 700 7px "Liberation Sans", sans-serif;
  fill: #fff;
  text-anchor: middle;
}

/* windows taskbar */
.taskbar {
  height: 60px;
  flex: none;
  box-sizing: border-box;
  display: flex;
  align-items: center;
  border-top: 1px solid #b7c1ce;
  background: linear-gradient(90deg, #e8f0f8 0%, #dce8f7 25%, #d6e0f4 50%, #dbe6f6 75%, #e8f1f8 100%);
}
.weather {
  width: 480px;
  flex: none;
  box-sizing: border-box;
  padding-left: 23px;
  display: flex;
  align-items: center;
  gap: 7px;
  font-size: 14px;
  line-height: 18px;
}
.soft {
  color: #555;
  font-size: 14.500px;
}
.task-cell {
  position: relative;
  width: 55px;
  height: 48px;
  flex: none;
  display: flex;
  align-items: center;
  justify-content: center;
}
.task-search {
  width: 272px;
  height: 39px;
  margin: 0 4.500px 0 5px;
  flex: none;
  box-sizing: border-box;
  padding-left: 12px;
  display: flex;
  align-items: center;
  gap: 11px;
  background: #f2f6fd;
  border: 1px solid #c6d0e2;
  border-radius: 20px;
  font-size: 16px;
  color: #555;
  overflow: hidden;
}
.bridge { margin-left: auto; }
.dotted::after {
  content: "";
  position: absolute;
  left: 25px;
  bottom: 0;
  width: 5px;
  height: 5px;
  border-radius: 50%;
  background: #7d8590;
}
.task-on::before {
  content: "";
  position: absolute;
  left: 3px;
  right: 3px;
  top: 0;
  bottom: 0;
  border-radius: 4px;
  background: rgba(255, 255, 255, .6);
}
.task-on svg { position: relative; }
.task-active {
  position: absolute;
  left: 17px;
  bottom: 1px;
  width: 20px;
  height: 4px;
  border-radius: 2px;
  background: #0f7bd6;
}
.badge {
  position: absolute;
  right: 8px;
  top: 0;
  width: 20px;
  height: 20px;
  border-radius: 50%;
  color: #fff;
  font-size: 11px;
  line-height: 20px;
  text-align: center;
}
.badge.blue { background: #0f6fd6; }
.badge.purple { background: #7b57c4; color: #e4d8ff; }
.badge.green { background: #1f6b2c; width: 16px; height: 16px; line-height: 16px; font-size: 9px; right: 10px; top: 4px; }
.badge.face { background: radial-gradient(circle at 50% 55%, #8a6a55 45%, #2a3a40 50%); }
.tray {
  margin-left: auto;
  padding-right: 12px;
  display: grid;
  grid-template-columns: 36px 44px 52px 42px 18px 42px 87px 40px 52px;
  justify-items: center;
  align-items: center;
  font-size: 14px;
  line-height: 19.500px;
}
.lang { text-align: center; }
.clock {
  justify-self: end;
  text-align: right;
  white-space: nowrap;
  font-size: 14.600px;
}
.tray-copilot {
  position: relative;
  height: 38px;
}
.pre {
  position: absolute;
  left: 6px;
  bottom: 0;
  width: 22px;
  height: 11px;
  background: #f4c430;
  border-radius: 2px;
  color: #222;
  font: 700 9px/11px "Liberation Sans", sans-serif;
  text-align: center;
}
```
